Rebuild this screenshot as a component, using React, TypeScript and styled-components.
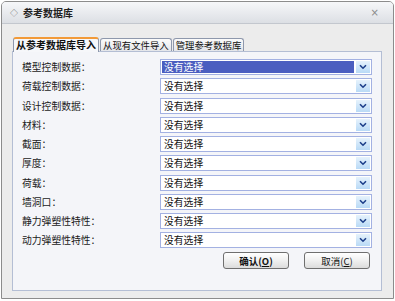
import React from "react";
import styled, { createGlobalStyle } from "styled-components";

const Global = createGlobalStyle`
  html, body { margin: 0; padding: 0; background: #ffffff; }
  body { font-family: "Noto Sans CJK SC", "Noto Sans", sans-serif; }
  * { box-sizing: border-box; }
`;

const Window = styled.div`
  margin: 1px 0 0 1px;
  width: 393px;
  height: 298px;
  border: 1px solid #8c8c8c;
  border-radius: 5px 5px 0 0;
  background: #ececec;
  display: flex;
  flex-direction: column;
  overflow: hidden;
`;

const TitleBar = styled.div`
  height: 22px;
  display: flex;
  align-items: center;
  padding: 0 8px 0 8px;
  background: linear-gradient(#f6f7f9, #dcdfe4);
  border-bottom: 1px solid #c3c7ce;
`;

const TitleIcon = styled.span`
  font-size: 8px;
  color: #666;
  width: 10px;
  margin-right: 3px;
  line-height: 1;
`;

const Title = styled.span`
  font-size: 10px;
  font-weight: bold;
  color: #222;
  flex: 1;
`;

const Close = styled.span`
  font-family: "DejaVu Sans", sans-serif;
  font-size: 10px;
  color: #8a8a8a;
  margin-right: 6px;
`;

const Body = styled.div`
  flex: 1;
  padding: 13px 11px 7px 10px;
  display: flex;
  flex-direction: column;
`;

const Tabs = styled.div`
  display: flex;
  align-items: flex-end;
  height: 14px;
  padding-left: 1px;
`;

const Tab = styled.div<{ $active?: boolean }>`
  height: ${(p) => (p.$active ? "15px" : "13px")};
  padding: 0 2px;
  font-size: ${(p) => (p.$active ? "10px" : "9.4px")};
  font-weight: ${(p) => (p.$active ? "bold" : "normal")};
  color: #111;
  line-height: 12px;
  border: 1px solid #8e98ac;
  border-bottom: none;
  border-top: ${(p) => (p.$active ? "2px solid #f29a38" : "1px solid #8e98ac")};
  border-radius: 3px 3px 0 0;
  background: ${(p) => (p.$active ? "#f6f7fa" : "linear-gradient(#fbfbfb, #e4e6ea)")};
  margin-right: 1px;
  margin-bottom: ${(p) => (p.$active ? "-1px" : "0")};
  position: relative;
  z-index: ${(p) => (p.$active ? 2 : 1)};
  white-space: nowrap;
`;

const Panel = styled.div`
  height: 240px;
  width: 370px;
  border: 1px solid #b4bed4;
  background: #f4f5f9;
  padding: 7px 8px 0 9px;
  display: flex;
  flex-direction: column;
`;

const Rows = styled.div`
  display: flex;
  flex-direction: column;
  gap: 3.25px;
`;

const Row = styled.div`
  display: grid;
  grid-template-columns: 138px 212px;
  align-items: center;
  height: 16px;
`;

const Label = styled.span`
  font-size: 9.8px;
  color: #1a1a1a;
  white-space: nowrap;
`;

const Select = styled.div`
  height: 16px;
  border: 1px solid #a3b1e2;
  background: #fff;
  display: flex;
  align-items: stretch;
  padding: 1px;
`;

const Value = styled.div<{ $selected?: boolean }>`
  flex: 1;
  font-size: 9.8px;
  line-height: 12px;
  padding-left: 2px;
  color: ${(p) => (p.$selected ? "#ffffff" : "#111")};
  background: ${(p) => (p.$selected ? "#4b5ec0" : "transparent")};
  margin-right: 2px;
`;

const Arrow = styled.div`
  width: 14px;
  background: linear-gradient(#e6f2fc, #b9daf6);
  display: flex;
  align-items: center;
  justify-content: center;
`;

const Buttons = styled.div`
  display: flex;
  justify-content: flex-end;
  gap: 15px;
  padding-right: 3px;
  margin-top: 4px;
`;

const Button = styled.div<{ $bold?: boolean }>`
  width: 66px;
  height: 17px;
  border: 1px solid #6f6f6f;
  border-radius: 3px;
  background: linear-gradient(#ffffff, #f0f0f0 50%, #dcdcdc);
  display: flex;
  align-items: center;
  justify-content: center;
  font-size: 9.5px;
  font-weight: ${(p) => (p.$bold ? "bold" : "normal")};
  color: #111;
  u { text-decoration: underline; }
`;

const Chevron = () => (
  <svg width="8" height="6" viewBox="0 0 8 6">
    <path d="M1 1.2 L4 4.2 L7 1.2" fill="none" stroke="#1d3f8a" strokeWidth="1.6" />
  </svg>
);

const labels = [
  "模型控制数据：",
  "荷载控制数据：",
  "设计控制数据：",
  "材料：",
  "截面：",
  "厚度：",
  "荷载：",
  "墙洞口：",
  "静力弹塑性特性：",
  "动力弹塑性特性：",
];

export default function App() {
  return (
    <>
      <Global />
      <Window>
        <TitleBar>
          <TitleIcon>◇</TitleIcon>
          <Title>参考数据库</Title>
          <Close>×</Close>
        </TitleBar>
        <Body>
          <Tabs>
            <Tab $active>从参考数据库导入</Tab>
            <Tab>从现有文件导入</Tab>
            <Tab>管理参考数据库</Tab>
          </Tabs>
          <Panel>
            <Rows>
              {labels.map((l, i) => (
                <Row key={l}>
                  <Label>{l}</Label>
                  <Select>
                    <Value $selected={i === 0}>没有选择</Value>
                    <Arrow>
                      <Chevron />
                    </Arrow>
                  </Select>
                </Row>
              ))}
            </Rows>
            <Buttons>
              <Button $bold>
                确认(<u>O</u>)
              </Button>
              <Button>
                取消(<u>C</u>)
              </Button>
            </Buttons>
          </Panel>
        </Body>
      </Window>
    </>
  );
}
